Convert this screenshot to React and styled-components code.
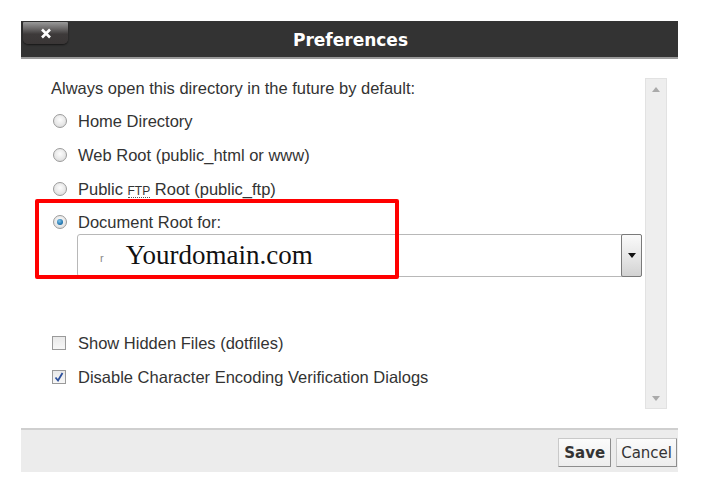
import React from "react";
import styled, { createGlobalStyle } from "styled-components";

const Global = createGlobalStyle`
  html, body { margin: 0; padding: 0; background: #fff; }
  body { font-family: "Liberation Sans", Arial, sans-serif; }
`;

const Page = styled.div`
  width: 713px;
  height: 497px;
  padding: 21px 0 0 21px;
  box-sizing: border-box;
`;

const Dialog = styled.div`
  width: 657px;
  display: flex;
  flex-direction: column;
`;

const TitleBar = styled.div`
  position: relative;
  height: 36px;
  background: #333333;
  border-bottom: 2px solid #9a9a9a;
  display: flex;
  align-items: center;
  justify-content: center;
  h1 {
    margin: 0 0 0 2px;
    font-family: "DejaVu Sans", Verdana, sans-serif;
    font-weight: bold;
    font-size: 17px;
    color: #fff;
    padding-top: 2px;
  }
`;

const CloseButton = styled.button`
  position: absolute;
  left: 2px;
  top: 1px;
  width: 45px;
  height: 22px;
  border: none;
  padding: 0;
  border-radius: 1px 1px 5px 5px;
  background: linear-gradient(#9a9a9a 0%, #6a6868 30%, #3d3a3a 55%, #3a3636 100%);
  box-shadow: 0 1px 2px rgba(0, 0, 0, 0.6);
  display: flex;
  align-items: center;
  justify-content: center;
`;

const Body = styled.div`
  height: 369px;
  display: flex;
  background: #fff;
`;

const Content = styled.div`
  flex: 1;
  padding: 20px 0 0 30px;
  color: #333;
  font-size: 16.5px;
`;

const Intro = styled.div`
  height: 18px;
  line-height: 18px;
  margin-bottom: 15px;
`;

const Option = styled.label`
  display: flex;
  align-items: center;
  gap: 11px;
  height: 18px;
  margin-bottom: ${(p) => p.$gap ?? 16}px;
  line-height: 18px;
`;

const Radio = styled.span`
  width: 14px;
  height: 14px;
  border-radius: 50%;
  border: 1px solid #9b9b9b;
  background: radial-gradient(circle at 50% 40%, #fdfdfd 0%, #e6e6e6 60%, #cfcfcf 100%);
  box-sizing: border-box;
  margin-left: 2px;
  display: flex;
  align-items: center;
  justify-content: center;
  &::after {
    content: "";
    width: 6px;
    height: 6px;
    border-radius: 50%;
    background: ${(p) =>
      p.$checked ? "radial-gradient(circle at 40% 35%, #7ec3ec, #1b6fa8 70%, #0d4f80)" : "transparent"};
  }
`;

const Check = styled.span`
  width: 14px;
  height: 14px;
  border: 1px solid #9a9a9a;
  background: linear-gradient(#e9e9e9, #f7f7f7);
  box-sizing: border-box;
  margin: 0 1px 0 1px;
  display: flex;
  align-items: center;
  justify-content: center;
`;

const Abbr = styled.span`
  font-size: 12px;
  border-bottom: 1px dotted #555;
  line-height: 12px;
  display: inline-block;
`;

const SelectRow = styled.div`
  position: relative;
  margin: 0 3px 57px 26px;
  height: 43px;
  display: flex;
  border: 1px solid #b8b8b8;
  border-radius: 3px;
  background: #fff;
  box-sizing: border-box;
`;

const SelectValue = styled.div`
  flex: 1;
  display: flex;
  align-items: center;
  padding-left: 22px;
  font-family: "Liberation Serif", "Times New Roman", serif;
  color: #111;
  small {
    font-family: "Liberation Sans", Arial, sans-serif;
    font-size: 11px;
    color: #888;
    margin-right: 22px;
    margin-top: 4px;
  }
  span {
    font-size: 27px;
  }
`;

const SelectButton = styled.div`
  width: 19px;
  border: 1px solid #7a7a7a;
  border-radius: 2px;
  margin: -1px -1px -1px 0;
  background: linear-gradient(#fafafa, #e4e4e4 60%, #d2d2d2);
  display: flex;
  align-items: center;
  justify-content: center;
`;

const Highlight = styled.div`
  position: absolute;
  left: 14px;
  top: 140px;
  width: 364px;
  height: 80px;
  border: 4px solid #ff0000;
  border-radius: 2px;
  box-sizing: border-box;
  pointer-events: none;
`;

const ContentWrap = styled.div`
  position: relative;
  flex: 1;
  display: flex;
`;

const Scrollbar = styled.div`
  width: 22px;
  margin: 19px 11px 19px 0;
  background: #eeeeee;
  border: 1px solid #e2e2e2;
  box-sizing: border-box;
  display: flex;
  flex-direction: column;
  justify-content: space-between;
  align-items: center;
  padding: 8px 0 7px;
`;

const Footer = styled.div`
  height: 44px;
  background: #ececec;
  border-top: 2px solid #cfcfcf;
  box-sizing: border-box;
  display: flex;
  justify-content: flex-end;
  align-items: center;
  gap: 5px;
  padding: 3px 1px 0 0;
`;

const Button = styled.button`
  height: 29px;
  padding: 0 ${(p) => (p.$primary ? 5 : 4)}px;
  font-family: "DejaVu Sans", Verdana, sans-serif;
  font-size: 15px;
  font-weight: ${(p) => (p.$primary ? "bold" : "normal")};
  color: #333;
  background: linear-gradient(#fbfbfb, #ededed);
  border: 1px solid #c9c9c9;
  border-right-color: #8d8d8d;
  border-bottom-color: #8d8d8d;
  border-radius: 1px;
`;

const Tri = ({ up, color = "#aaa" }) => (
  <svg width="8" height="5" viewBox="0 0 8 5">
    <path d={up ? "M0 5 L4 0 L8 5 Z" : "M0 0 L8 0 L4 5 Z"} fill={color} />
  </svg>
);

export default function App() {
  return (
    <Page>
      <Global />
      <Dialog>
        <TitleBar>
          <CloseButton>
            <svg width="12" height="11" viewBox="0 0 12 11">
              <path d="M2 1.5 L10 9.5 M10 1.5 L2 9.5" stroke="#fff" strokeWidth="2.6" />
            </svg>
          </CloseButton>
          <h1>Preferences</h1>
        </TitleBar>
        <Body>
          <ContentWrap>
            <Content>
              <Intro>Always open this directory in the future by default:</Intro>
              <Option>
                <Radio />
                <span>Home Directory</span>
              </Option>
              <Option>
                <Radio />
                <span>Web Root (public_html or www)</span>
              </Option>
              <Option $gap={15}>
                <Radio />
                <span>
                  Public <Abbr>FTP</Abbr> Root (public_ftp)
                </span>
              </Option>
              <Option $gap={3}>
                <Radio $checked />
                <span>Document Root for:</span>
              </Option>
              <SelectRow>
                <SelectValue>
                  <small>r</small>
                  <span>Yourdomain.com</span>
                </SelectValue>
                <SelectButton>
                  <Tri color="#111" />
                </SelectButton>
              </SelectRow>
              <Option>
                <Check />
                <span>Show Hidden Files (dotfiles)</span>
              </Option>
              <Option>
                <Check>
                  <svg width="10" height="10" viewBox="0 0 10 10">
                    <path d="M1.5 5.5 L4 8.5 L8.5 1" stroke="#2b4f9c" strokeWidth="1.8" fill="none" />
                  </svg>
                </Check>
                <span>Disable Character Encoding Verification Dialogs</span>
              </Option>
            </Content>
            <Highlight />
          </ContentWrap>
          <Scrollbar>
            <Tri up />
            <Tri />
          </Scrollbar>
        </Body>
        <Footer>
          <Button $primary>Save</Button>
          <Button>Cancel</Button>
        </Footer>
      </Dialog>
    </Page>
  );
}
